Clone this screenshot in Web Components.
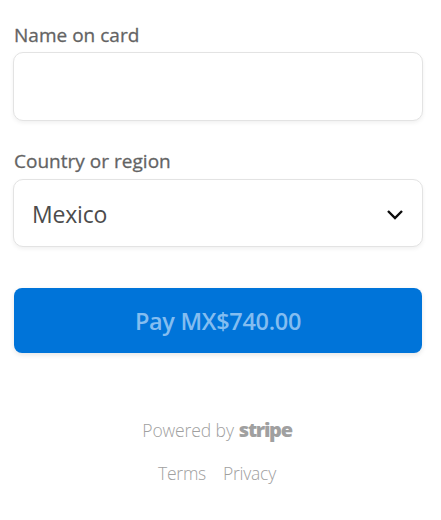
<!DOCTYPE html>
<html><head><meta charset="utf-8">
<style>
html,body{margin:0;padding:0;background:#fff}
body{font-family:"Open Sans","Noto Sans",sans-serif}
</style></head><body>
<pay-form>
<form-field label="Name on card"><text-box></text-box></form-field>
<form-field label="Country or region" class="second"><select-box value="Mexico"></select-box></form-field>
<pay-button style="margin-top:41px">Pay MX$740.00</pay-button>
<pay-footer></pay-footer>
</pay-form>
<script>
function def(name,html){
  customElements.define(name,class extends HTMLElement{
    connectedCallback(){
      if(this.shadowRoot)return;
      const r=this.attachShadow({mode:'open'});
      r.innerHTML=html(this);
    }
  });
}
const boxCss=`display:block;box-sizing:border-box;background:#fff;border:1.5px solid #e3e3e3;border-radius:10px;box-shadow:0 2px 4px rgba(0,0,0,.06);`;
def('pay-form',()=>`<style>:host{display:flex;flex-direction:column;padding:22px 18px 0 13px;box-sizing:border-box;width:441px;height:520px}
::slotted(.second){margin-top:27px;gap:5px}</style><slot></slot>`);
def('form-field',h=>`<style>:host{display:flex;flex-direction:column;gap:4px}
.l{font:500 19px/26px "Open Sans",sans-serif;-webkit-text-stroke:.3px #666;color:#636363;padding-left:1px;letter-spacing:.02px}</style>
<div class="l">${h.getAttribute('label')}</div><slot></slot>`);
def('text-box',()=>`<style>:host{${boxCss}height:69px}</style>`);
def('select-box',h=>`<style>:host{${boxCss}height:68px;display:flex;align-items:center;justify-content:space-between;padding:1px 18px 0 18px}
.v{font:400 23px/30px "Open Sans",sans-serif;color:#4c4c4c;letter-spacing:-.2px}
svg{display:block;margin-top:1px}</style>
<span class="v">${h.getAttribute('value')}</span>
<svg width="18" height="11" viewBox="0 0 18 11" fill="none"><path d="M2 2l7 7 7-7" stroke="#0c0c0c" stroke-width="2.4"/></svg>`);
def('pay-button',()=>`<style>:host{display:flex;align-items:center;justify-content:center;box-sizing:border-box;width:408px;height:65px;margin-left:1px;background:#0074d9;border-radius:8px;box-shadow:0 2px 5px rgba(0,0,0,.1);
font:600 23.5px/30px "Open Sans",sans-serif;letter-spacing:-.3px;color:#84bdf0}</style><slot></slot>`);
def('pay-footer',()=>`<style>:host{display:flex;flex-direction:column;align-items:center;width:408px;margin:62px 0 0 1px;color:#a0a0a0;font:300 17.5px/30px "Open Sans",sans-serif;letter-spacing:-.1px}
.p{display:flex;align-items:baseline;gap:5px;margin-right:2px}
.s{font:800 20px/30px "Open Sans",sans-serif;letter-spacing:-1.3px;color:#a0a0a0}
.l{display:flex;gap:17px;margin:13px 2px 0 0;letter-spacing:-.25px}</style>
<div class="p"><span>Powered by</span><span class="s">stripe</span></div>
<div class="l"><span>Terms</span><span>Privacy</span></div>`);
</script>
</body></html>
